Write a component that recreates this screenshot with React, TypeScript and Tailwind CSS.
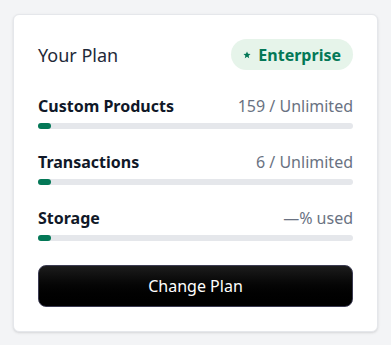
const usage = [
  { label: 'Custom Products', value: '159 / Unlimited', pct: 4 },
  { label: 'Transactions', value: '6 / Unlimited', pct: 4 },
  { label: 'Storage', value: '—% used', pct: 4 },
]

export default function App() {
  return (
    <div
      className="min-h-[345px] bg-[#f3f4f6] p-[13px] pt-[14px]"
      style={{ fontFamily: '"Noto Sans", "Open Sans", sans-serif' }}
    >
      <div className="rounded-md border border-gray-200 bg-white p-6 shadow-sm">
        {/* Header */}
        <div className="flex h-[31px] items-center justify-between">
          <h2 className="text-lg text-gray-800">Your Plan</h2>
          <span className="flex h-[31px] items-center gap-[7px] rounded-full bg-[#e6f4ea] pl-3 pr-3 text-base font-bold text-[#047857]">
            <svg viewBox="0 0 24 24" className="h-2 w-2 fill-current">
              <path d="M12 1.5l3.1 7 7.4.6-5.6 4.9 1.7 7.4L12 17.5l-6.6 3.9 1.7-7.4L1.5 9.1l7.4-.6z" />
            </svg>
            Enterprise
          </span>
        </div>

        {/* Usage rows */}
        <div className="mt-6 flex flex-col gap-[21px]">
          {usage.map((u) => (
            <div key={u.label}>
              <div className="flex h-6 items-center justify-between text-base">
                <span className="font-bold text-gray-900">{u.label}</span>
                <span className="text-gray-500">{u.value}</span>
              </div>
              <div className="mt-[5px] h-1.5 w-full rounded-full bg-gray-200">
                <div className="h-1.5 rounded-full bg-[#047857]" style={{ width: `${u.pct}%` }} />
              </div>
            </div>
          ))}
        </div>

        <button className="mt-6 h-[42px] w-full rounded-lg border border-[#3b3b52] bg-gradient-to-b from-[#1c1c1c] to-black text-base text-white">
          Change Plan
        </button>
      </div>
    </div>
  )
}
